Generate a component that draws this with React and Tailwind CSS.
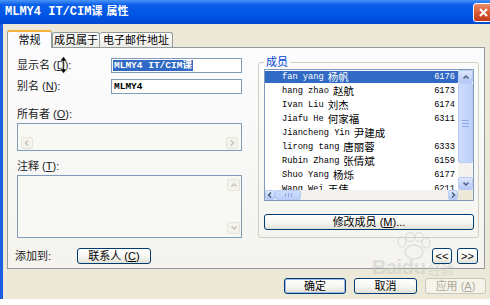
import React from 'react';
import clsx from 'clsx';

const cjk = "font-['Liberation_Sans','Noto_Sans_CJK_SC',sans-serif]";
const mono = "font-['Liberation_Mono','Noto_Sans_CJK_SC',monospace]";

const members = [
    ['fan yang', '杨帆', '6176'],
    ['hang zhao', '赵航', '6173'],
    ['Ivan Liu', '刘杰', '6174'],
    ['Jiafu He', '何家福', '6311'],
    ['Jiancheng Yin', '尹建成', ''],
    ['lirong tang', '唐丽蓉', '6333'],
    ['Rubin Zhang', '张倩斌', '6159'],
    ['Shuo Yang', '杨烁', '6177'],
    ['Wang Wei', '王伟', '6211'],
];

const Chevron = ({ dir, color }) => {
    const d = {
        up: 'M1.5 5.5 L4 3 L6.5 5.5',
        down: 'M1.5 2.5 L4 5 L6.5 2.5',
        left: 'M5 1.5 L2.5 4 L5 6.5',
        right: 'M3 1.5 L5.5 4 L3 6.5',
    }[dir];
    return (
        <svg width="8" height="8" viewBox="0 0 8 8">
            <path d={d} fill="none" stroke={color} strokeWidth="1.5" />
        </svg>
    );
};

const BlueArrow = ({ dir, className }) => (
    <div className={clsx('flex items-center justify-center rounded-[2px] border border-[#B6CBF6] bg-linear-to-b from-[#DFE8FE] to-[#B4C8F4]', className)}>
        <Chevron dir={dir} color="#4D6185" />
    </div>
);

const GrayArrow = ({ dir, className }) => (
    <div className={clsx('flex items-center justify-center rounded-[2px] border border-[#E6E4D9] bg-[#F4F3EE]', className)}>
        <Chevron dir={dir} color="#C4C2B6" />
    </div>
);

const XpButton = ({ children, className, disabled, primary }) => (
    <div
        className={clsx(
            'flex items-center justify-center rounded-[3px] border text-[11px] leading-none',
            cjk,
            disabled
                ? 'border-[#C9C7BA] bg-[#F5F4EA] text-[#ACA899]'
                : 'border-[#003C74] bg-linear-to-b from-white via-[#F7F7F4] to-[#E3E1D6] text-black',
            primary && 'shadow-[inset_0_0_0_1px_#9DB7EA]',
            className
        )}
    >
        {children}
    </div>
);

const App = () => {
    return (
        <div className={clsx('relative h-[305px] w-[490px] overflow-hidden bg-white', cjk)}>
            {/* title bar */}
            <div className="flex h-[24px] items-center justify-between bg-[linear-gradient(to_bottom,#4A94F8_0%,#0A5EE8_20%,#0056E6_60%,#0049D2_100%)] pl-[5px]">
                <div className="flex items-baseline text-white">
                    <span className={clsx('text-[12px] font-bold', mono)}>MLMY4 IT/CIM</span>
                    <span className="text-[11px] font-bold">课</span>
                    <span className="ml-[4px] text-[11px] font-bold">属性</span>
                </div>
                <div className="mr-[-4px] flex h-[19px] w-[21px] items-center justify-center rounded-[3px] border border-white bg-linear-to-b from-[#EA8C6A] via-[#D65A34] to-[#C0391A]">
                    <svg width="11" height="11" viewBox="0 0 11 11">
                        <path d="M2 2 L9 9 M9 2 L2 9" stroke="white" strokeWidth="2" />
                    </svg>
                </div>
            </div>

            {/* window body */}
            <div className="h-[275px] border-l-[3px] border-[#1C5EE2] bg-[#ECE9D8] pl-[4px] pt-[6px]">
                {/* tabs */}
                <div className="relative z-10 flex items-end">
                    <div className="-mb-px flex h-[18px] w-[45px] items-center justify-center rounded-t-[3px] border-x border-t-2 border-[#919B9C] border-t-[#F5B33A] bg-[#FCFCFE] text-[11px] text-black">
                        常规
                    </div>
                    <div className="flex h-[15px] w-[48px] items-center justify-center rounded-t-[3px] border-x border-t border-[#919B9C] bg-linear-to-b from-white to-[#ECEBE5] text-[11px] text-black">
                        成员属于
                    </div>
                    <div className="flex h-[15px] w-[73px] items-center justify-center rounded-t-[3px] border-r border-t border-[#919B9C] bg-linear-to-b from-white to-[#ECEBE5] text-[11px] text-black">
                        电子邮件地址
                    </div>
                </div>

                {/* tab panel */}
                <div className="flex h-[222px] w-[478px] flex-col border border-[#919B9C] bg-linear-to-b from-[#FCFCFE] to-[#F4F3EE]">
                    <div className="flex items-start">
                        {/* left column */}
                        <div className="ml-[9px] flex w-[225px] flex-col pt-[10px] text-[11px] text-[#222]">
                            <div className="relative flex h-[15px] items-center">
                                <span className="w-[94px]">显示名 (<span className="underline">D</span>):</span>
                                <svg className="absolute left-[42px] top-[-2px]" width="9" height="18" viewBox="0 0 9 18">
                                    <path d="M4.5 0.5 L8 5 L5.3 5 L5.3 13 L8 13 L4.5 17.5 L1 13 L3.7 13 L3.7 5 L1 5 Z" fill="black" stroke="white" strokeWidth="0.6" />
                                </svg>
                                <div className="flex h-[15px] w-[131px] items-center border border-[#7F9DB9] bg-white pl-px">
                                    <span className={clsx('bg-[#316AC5] px-px text-[9.5px] font-bold leading-[11px] text-white', mono)}>MLMY4 IT/CIM课</span>
                                </div>
                            </div>
                            <div className="mt-[6px] flex h-[15px] items-center">
                                <span className="w-[94px]">别名 (<span className="underline">N</span>):</span>
                                <div className="flex h-[15px] w-[131px] items-center border border-[#7F9DB9] bg-white pl-[2px]">
                                    <span className={clsx('text-[9.5px] font-bold leading-[11px] text-black', mono)}>MLMY4</span>
                                </div>
                            </div>
                            <div className="mt-[14px] h-[12px] leading-[12px]">所有者 (<span className="underline">O</span>):</div>
                            <div className="mt-[3px] flex h-[28px] flex-col justify-end border border-[#7F9DB9] bg-[#F8F8F5] p-px">
                                <div className="flex h-[12px] justify-between px-[2px]">
                                    <GrayArrow dir="left" className="w-[12px]" />
                                    <GrayArrow dir="right" className="w-[12px]" />
                                </div>
                            </div>
                            <div className="mt-[9px] h-[12px] leading-[12px]">注释 (<span className="underline">T</span>):</div>
                            <div className="mt-[3px] flex h-[63px] justify-end border border-[#7F9DB9] bg-[#F8F8F5] p-px">
                                <div className="flex w-[13px] flex-col justify-between py-[2px]">
                                    <GrayArrow dir="up" className="h-[12px]" />
                                    <GrayArrow dir="down" className="h-[12px]" />
                                </div>
                            </div>
                        </div>

                        {/* members group */}
                        <fieldset className="ml-[16px] mt-[7px] w-[221px] rounded-[3px] border border-[#D0D0BF] pb-[7px] pl-[5px]">
                            <legend className="h-[14px] px-[2px] text-[11px] leading-[14px] text-[#0046D5]">成员</legend>
                            <div className="flex h-[132px] w-[210px] flex-col border border-[#7F9DB9] bg-white">
                                <div className="flex min-h-0 flex-1">
                                    <div className="flex-1 overflow-hidden">
                                        {members.map(([name, cn, ext], i) => (
                                            <div key={name} className="flex h-[14px] items-center">
                                                <div
                                                    className={clsx(
                                                        'flex h-[12px] w-full items-center justify-between pl-[17px] pr-[3px]',
                                                        i === 0 ? 'bg-[#316AC5] text-white' : 'text-black'
                                                    )}
                                                >
                                                    <span className="flex items-center whitespace-nowrap leading-none">
                                                        <span className={clsx('text-[8.7px]', mono)}>{name}</span>
                                                        <span className="ml-[4px] text-[10.5px]">{cn}</span>
                                                    </span>
                                                    <span className={clsx('text-[8.7px] leading-none', mono)}>{ext}</span>
                                                </div>
                                            </div>
                                        ))}
                                    </div>
                                    <div className="flex w-[15px] flex-col bg-[#F3F2EE]">
                                        <BlueArrow dir="up" className="h-[13px]" />
                                        <div className="flex h-[80px] flex-col items-center justify-center gap-[2px] rounded-[2px] border border-[#B6CBF6] bg-linear-to-r from-[#CFDDFC] to-[#BCD0F8]">
                                            <div className="h-px w-[7px] bg-[#8DA9E8]" />
                                            <div className="h-px w-[7px] bg-[#8DA9E8]" />
                                            <div className="h-px w-[7px] bg-[#8DA9E8]" />
                                        </div>
                                        <div className="flex-1" />
                                        <BlueArrow dir="down" className="h-[13px]" />
                                    </div>
                                </div>
                                <div className="flex h-[10px]">
                                    <div className="flex flex-1 bg-[#F3F2EE]">
                                        <BlueArrow dir="left" className="w-[10px]" />
                                        <div className="flex w-[26px] items-center justify-center gap-[2px] rounded-[2px] border border-[#B6CBF6] bg-linear-to-b from-[#CFDDFC] to-[#BCD0F8]">
                                            <div className="h-[4px] w-px bg-[#8DA9E8]" />
                                            <div className="h-[4px] w-px bg-[#8DA9E8]" />
                                            <div className="h-[4px] w-px bg-[#8DA9E8]" />
                                        </div>
                                        <div className="flex-1" />
                                        <BlueArrow dir="right" className="w-[10px]" />
                                    </div>
                                    <div className="w-[15px] bg-[#ECE9D8]" />
                                </div>
                            </div>
                            <XpButton className="mt-[13px] h-[16px] w-[210px]">修改成员 (<span className="underline">M</span>)...</XpButton>
                        </fieldset>
                    </div>

                    {/* bottom row in panel */}
                    <div className="mt-[10px] flex items-center pl-[7px] pr-[6px]">
                        <span className="w-[62px] text-[11px] text-[#222]">添加到:</span>
                        <XpButton className="h-[16px] w-[74px]">联系人 (<span className="underline">C</span>)</XpButton>
                        <div className="ml-auto flex gap-[5px]">
                            <XpButton className="h-[16px] w-[20px]">&lt;&lt;</XpButton>
                            <XpButton className="h-[16px] w-[21px]">&gt;&gt;</XpButton>
                        </div>
                    </div>
                </div>

                {/* dialog buttons */}
                <div className="mt-[9px] flex justify-end gap-[8px] pr-[4px]">
                    <XpButton primary className="h-[16px] w-[62px]">确定</XpButton>
                    <XpButton className="h-[16px] w-[63px]">取消</XpButton>
                    <XpButton disabled className="h-[16px] w-[61px]">应用 (<span className="underline">A</span>)</XpButton>
                </div>
            </div>

            {/* baidu watermark */}
            <div className="pointer-events-none absolute left-[372px] top-[232px] flex flex-col items-center opacity-50">
                <svg width="40" height="28" viewBox="0 0 40 28">
                    <g fill="none" stroke="#D0D0D0" strokeWidth="1.5">
                        <ellipse cx="9" cy="10" rx="4" ry="5" />
                        <ellipse cx="17" cy="5" rx="4" ry="4.5" />
                        <ellipse cx="26" cy="5" rx="4" ry="4.5" />
                        <ellipse cx="33" cy="11" rx="4" ry="5" />
                        <ellipse cx="21" cy="20" rx="9" ry="7" />
                    </g>
                </svg>
                <div className="-mt-[8px] flex items-baseline text-[#C8C8C8]">
                    <span className="text-[20px] font-bold tracking-tight">Bai</span>
                    <span className="text-[20px] font-bold">du</span>
                    <span className="ml-[2px] text-[13px]">经验</span>
                </div>
            </div>
        </div>
    );
};

export default App;
